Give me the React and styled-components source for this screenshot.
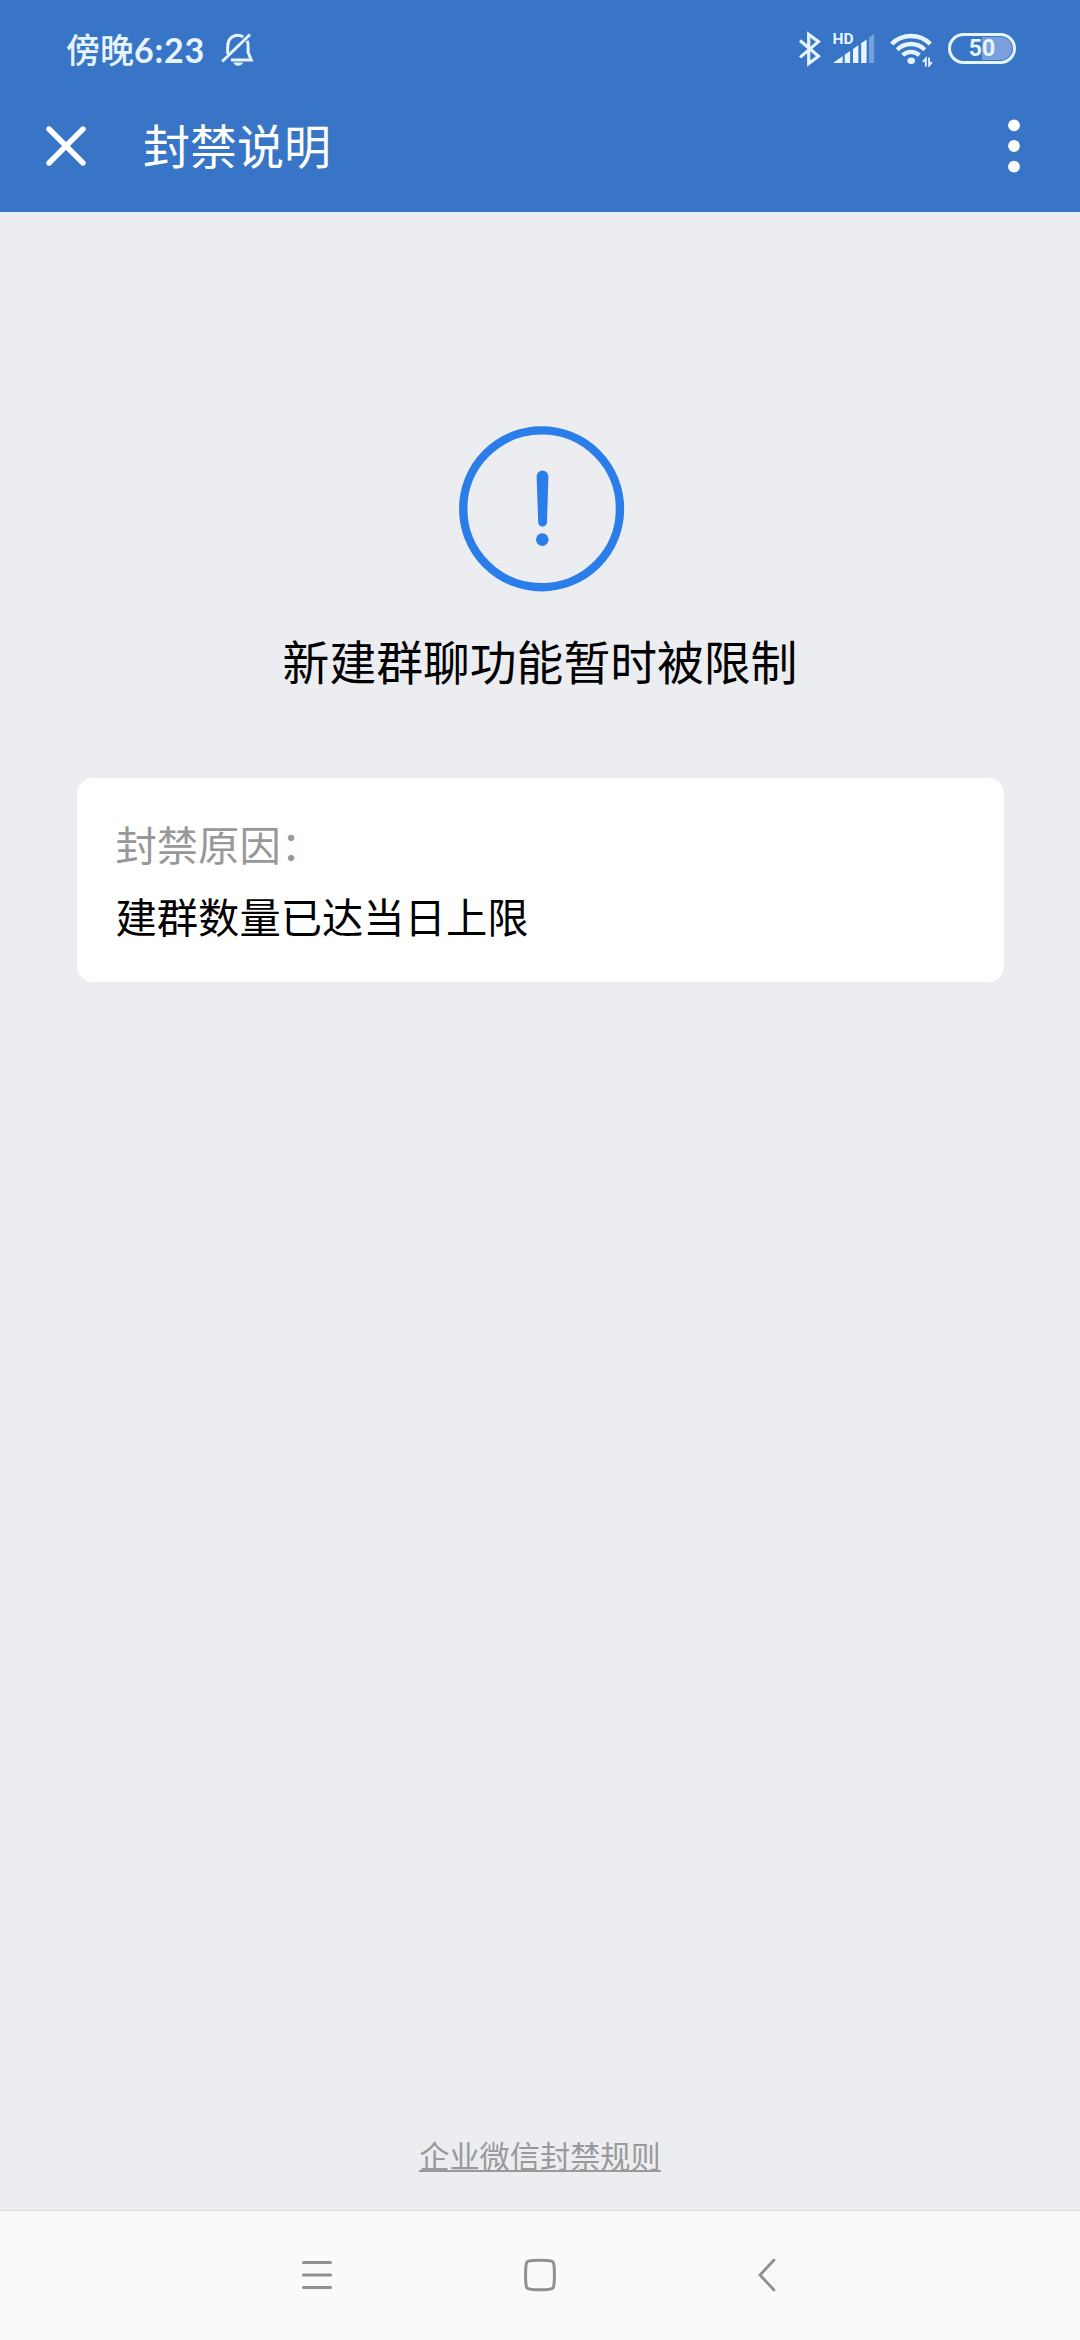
import React from "react";
import styled, { createGlobalStyle } from "styled-components";

const App = () => {
  return (
    <>
      <GlobalStyle />
      <Page>
        <Header>
          <StatusBar>
            <StatusGroup>
              <Clock>
                傍晚<ClockDigits>6:23</ClockDigits>
              </Clock>
              <BellOffIcon />
            </StatusGroup>
            <StatusGroup>
              <BluetoothIcon />
              <SignalIcon />
              <WifiIcon />
              <Battery>50</Battery>
            </StatusGroup>
          </StatusBar>
          <TitleBar>
            <CloseIcon />
            <Title>封禁说明</Title>
            <MoreIcon />
          </TitleBar>
        </Header>

        <Content>
          <WarnIcon />
          <Message>新建群聊功能暂时被限制</Message>
          <ReasonCard>
            <ReasonText $color="#989898">封禁原因：</ReasonText>
            <ReasonText $color="#000">建群数量已达当日上限</ReasonText>
          </ReasonCard>
          <RuleLink>企业微信封禁规则</RuleLink>
        </Content>

        <NavBar>
          <NavIcons />
        </NavBar>
      </Page>
    </>
  );
};

const BellOffIcon = () => (
  <BellSvg viewBox="0 0 34 36" width="34" height="36">
    <g fill="none" stroke="#e6f4ff" strokeWidth="3">
      <path d="M2.2 29.5 30 2.5" />
      <path d="M7.7 22V14.2C7.7 7.8 12 3.3 17.6 3.3c2.2 0 4 .6 5.6 1.7" />
      <path d="M27.2 8.8c.6 1.6.9 3.4.9 5.4v6.3l3.2 7.5H11" />
    </g>
    <path d="M13.2 30.5h10c-1 2-2.8 3.2-5 3.2s-4-1.2-5-3.2z" fill="#e6f4ff" />
  </BellSvg>
);

const BluetoothIcon = () => (
  <svg viewBox="0 0 22 36" width="22" height="36">
    <path
      d="M1 9.5 19.5 25.2 9.7 32.5V3.5L19.5 10.6 1 26.4"
      fill="none"
      stroke="#e6f4ff"
      strokeWidth="3.2"
    />
  </svg>
);

const SignalIcon = () => (
  <SignalSvg viewBox="0 0 42 36" width="42" height="36">
    <text
      x="-0.5"
      y="13"
      fontSize="15.5"
      fontWeight="700"
      fontFamily="Roboto, sans-serif"
      fill="#e6f4ff"
    >
      HD
    </text>
    <g fill="#e6f4ff">
      <path d="M.7 31.6 9.7 25V32H.7z" />
      <path d="M11.7 23.7 17.1 19.9V32h-5.4z" />
      <path d="M20 18 25.4 14.2V32H20z" />
      <path d="M28.2 12.2 33.6 8.4V32h-5.4z" />
      <path d="M36 6.5 41.2 2.8V32H36z" opacity=".35" />
    </g>
  </SignalSvg>
);

const WifiIcon = () => (
  <WifiSvg viewBox="0 0 44 36" width="44" height="36">
    <g fill="none" stroke="#e6f4ff" strokeWidth="4.3">
      <path d="M1.7 13C7 7.6 13.6 5 21 5s14 2.6 19.3 8" />
      <path d="M7.2 18.7c4-3.8 8.5-5.7 13.8-5.7s9.8 1.9 13.8 5.7" />
      <path d="M12.600 24.200c2.500-2.200 5.200-3.300 8.400-3.300s5.900 1.100 8.400 3.300" />
    </g>
    <ellipse cx="21.200" cy="29.800" rx="3.800" ry="3.300" fill="#e6f4ff" />
    <path
      d="M35.800 35.500V27.500L32.800 31M39.100 26.500v8L42 31"
      fill="none"
      stroke="#e6f4ff"
      strokeWidth="1.900"
    />
  </WifiSvg>
);

const CloseIcon = () => (
  <svg viewBox="0 0 40 40" width="40" height="40">
    <path
      d="M3 3 37 37M37 3 3 37"
      stroke="#fff"
      strokeWidth="5.4"
      strokeLinecap="round"
    />
  </svg>
);

const MoreIcon = () => (
  <svg viewBox="0 0 12 54" width="12" height="54" fill="#fff">
    <circle cx="6" cy="6.3" r="5.9" />
    <circle cx="6" cy="27" r="5.9" />
    <circle cx="6" cy="47.7" r="5.9" />
  </svg>
);

const WarnIcon = () => (
  <WarnSvg viewBox="0 0 166 166" width="166" height="166">
    <circle
      cx="82.6"
      cy="82.8"
      r="78.4"
      fill="none"
      stroke="#2b7de9"
      strokeWidth="8.4"
    />
    <path
      d="M77.6 50.5a5.9 5.9 0 0 1 11.8 0L88 96.2a4.4 4.4 0 0 1-8.8 0z"
      fill="#2b7de9"
    />
    <circle cx="83.3" cy="113.6" r="6.3" fill="#2b7de9" />
  </WarnSvg>
);

const NavIcons = () => (
  <>
    <svg viewBox="0 0 30 34" width="30" height="34">
      <path
        d="M1.5 4.5h27M1.5 17h27M1.5 29.5h27"
        stroke="#8f8f8f"
        strokeWidth="3"
        strokeLinecap="round"
      />
    </svg>
    <HomeSvg viewBox="0 0 32 34" width="32" height="34">
      <path
        d="M16 2.2c9.5 0 11.7.4 13 1.9 1.2 1.4 1.4 4 1.4 12.9s-.2 11.5-1.4 12.9c-1.3 1.5-3.5 1.9-13 1.9s-11.7-.4-13-1.9C1.8 28.5 1.6 25.9 1.6 17S1.8 5.5 3 4.1c1.3-1.5 3.5-1.9 13-1.9z"
        fill="none"
        stroke="#8f8f8f"
        strokeWidth="3"
      />
    </HomeSvg>
    <BackSvg viewBox="0 0 18 34" width="18" height="34">
      <path
        d="M16 2 2 17l14 15"
        fill="none"
        stroke="#8f8f8f"
        strokeWidth="2.8"
        strokeLinecap="round"
      />
    </BackSvg>
  </>
);

export default App;

const GlobalStyle = createGlobalStyle`
  body {
    margin: 0;
    font-family: "Noto Sans CJK SC", sans-serif;
  }

  svg {
    display: block;
    flex: none;
  }
`;

const Page = styled.div`
  display: flex;
  flex-direction: column;
  width: 1080px;
  height: 2340px;
  background-color: #ebedf1;
`;

const Header = styled.header`
  height: 212px;
  color: #fff;
  background-color: #3875c6;
`;

const StatusBar = styled.div`
  display: flex;
  justify-content: space-between;
  box-sizing: border-box;
  height: 80px;
  padding: 31px 64px 0 66px;
`;

const StatusGroup = styled.div`
  display: flex;
  align-items: flex-start;
  height: 36px;
`;

const Clock = styled.div`
  width: 154px;
  font-size: 34px;
  font-weight: 500;
  line-height: 36px;
  white-space: nowrap;
  color: #e6f4ff;
`;

const ClockDigits = styled.span`
  font-family: Lato, sans-serif;
  font-weight: 700;
  letter-spacing: 0.8px;
`;

const BellSvg = styled.svg`
  margin-top: 1px;
`;

const SignalSvg = styled.svg`
  margin-left: 12px;
`;

const WifiSvg = styled.svg`
  margin-left: 15px;
`;

const Battery = styled.div`
  box-sizing: border-box;
  width: 68px;
  height: 31px;
  margin: 2px 0 0 14px;
  padding: 1px;
  border: 3px solid #e6f4ff;
  border-radius: 16px;
  background: linear-gradient(90deg, transparent 50%, #7b9fdc 50%) content-box;
  font-family: Roboto, sans-serif;
  font-size: 23px;
  font-weight: 700;
  line-height: 24px;
  text-align: center;
  color: #e6f4ff;
`;

const TitleBar = styled.div`
  display: flex;
  align-items: center;
  height: 132px;
  padding: 0 60px 0 46px;

  svg:last-child {
    margin-left: auto;
  }
`;

const Title = styled.div`
  margin: -4px 0 0 57px;
  font-size: 47px;
  line-height: 60px;
`;

const Content = styled.main`
  flex: 1;
  display: flex;
  flex-direction: column;
  align-items: center;
`;

const WarnSvg = styled.svg`
  margin: 214px 0 0 3px;
`;

const Message = styled.div`
  margin-top: 33px;
  font-size: 46.8px;
  line-height: 70px;
  color: #000;
`;

const ReasonCard = styled.div`
  box-sizing: border-box;
  width: 927px;
  height: 204px;
  margin-top: 83px;
  padding: 29px 39px;
  border-radius: 16px;
  background-color: #fff;
`;

const ReasonText = styled.div`
  font-size: 41.3px;
  line-height: 72px;
  color: ${({ $color }) => $color};
`;

const RuleLink = styled.a`
  margin: auto 0 38px;
  border-bottom: 2px solid #999;
  font-size: 30.2px;
  line-height: 30px;
  color: #999;
`;

const NavBar = styled.nav`
  display: flex;
  box-sizing: border-box;
  height: 130px;
  padding: 47px 0 0 302px;
  border-top: 1px solid #dcdde0;
  background-color: #fafafa;
`;

const HomeSvg = styled.svg`
  margin-left: 192px;
`;

const BackSvg = styled.svg`
  margin-left: 202px;
`;
